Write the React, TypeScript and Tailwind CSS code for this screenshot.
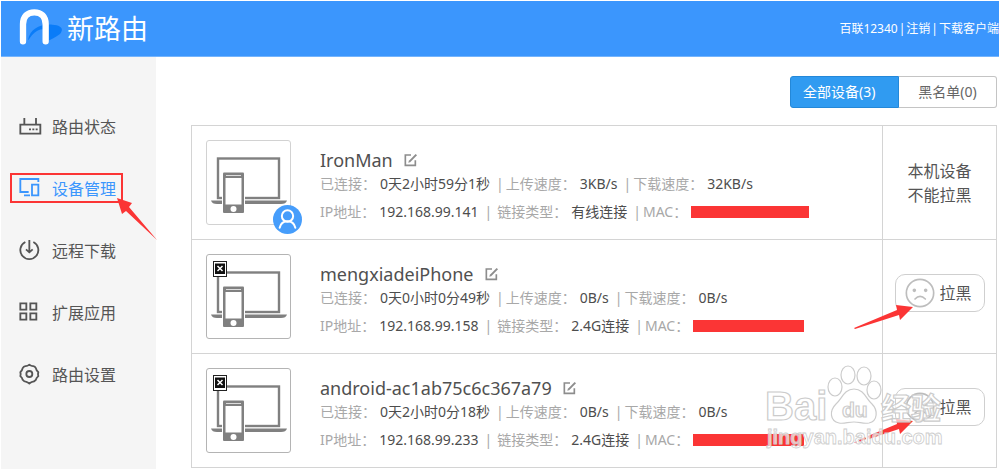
import type { ReactNode } from "react";

const RED = "#fb3535";

type Device = {
  name: string;
  connected: string;
  up: string;
  down: string;
  ip: string;
  link: string;
  own?: boolean;
  bar: string;
};

const devices: Device[] = [
  { name: "IronMan", connected: "0天2小时59分1秒", up: "3KB/s", down: "32KB/s", ip: "192.168.99.141", link: "有线连接", own: true, bar: "w-[118px]" },
  { name: "mengxiadeiPhone", connected: "0天0小时0分49秒", up: "0B/s", down: "0B/s", ip: "192.168.99.158", link: "2.4G连接", bar: "w-[111px]" },
  { name: "android-ac1ab75c6c367a79", connected: "0天2小时0分18秒", up: "0B/s", down: "0B/s", ip: "192.168.99.233", link: "2.4G连接", bar: "w-[111px]" },
];

function Logo() {
  return (
    <svg viewBox="0 0 132 108" className="h-9 w-11" aria-hidden="true">
      <path d="M27 92C34 60 62 44 100 47c30 2 34 14 23 28C110 84 96 93 82 97c8-20 6-32-8-36-18-3-33 14-45 31z" fill="#0a7cf8" />
      <path d="M12 97V46C12 22 26 10 46 10s34 12 34 36v51" fill="none" stroke="#fff" strokeWidth="19" strokeLinecap="round" />
    </svg>
  );
}

function NavSvg({ children }: { children: ReactNode }) {
  return (
    <svg viewBox="0 0 72 72" className="size-6 shrink-0" fill="none" stroke="currentColor" strokeWidth="5.500" aria-hidden="true">
      {children}
    </svg>
  );
}

const routerIcon = (
  <NavSvg>
    <path d="M7 29h60v27H7zM19 9v20M54 9v20" />
    <path d="M33 43h6M43 43h6M53 43h6" />
  </NavSvg>
);
const devicesIcon = (
  <NavSvg>
    <path d="M61 15V6H7v39h25M18 55h18" />
    <path d="M42 23h19v32H42z" />
  </NavSvg>
);
const downloadIcon = (
  <NavSvg>
    <path d="M22 9a27 27 0 1 0 24 0" />
    <path d="M34 3v35M24 31l10 9 10-9" />
  </NavSvg>
);
const appsIcon = (
  <NavSvg>
    <path d="M7 7h18v19H7zM37 7h18v19H37zM7 37h18v19H7zM37 37h18v19H37z" />
  </NavSvg>
);
const settingsIcon = (
  <NavSvg>
    <path d="M34 5q6 5 12 4.500q5 .5 7.500 6q1 6 7.500 12q-2 5.500 0 12q-6 5-7.500 11q-5 6-11 6q-4 1-8.500 5q-5-4-9-5q-7 0-11-6q-1-6-7-11q2-6.500 0-12q6-6 7-12q3-5.500 8-6q6 .5 12-4.500z" strokeLinejoin="round" />
    <circle cx="34" cy="33" r="9" />
  </NavSvg>
);

const navItems = [
  { label: "路由状态", icon: routerIcon },
  { label: "设备管理", icon: devicesIcon, active: true },
  { label: "远程下载", icon: downloadIcon },
  { label: "扩展应用", icon: appsIcon },
  { label: "路由设置", icon: settingsIcon },
];

function DevicePicture({ own }: { own?: boolean }) {
  return (
    <div className={`relative size-[85px] shrink-0 rounded-[3px] border ${own ? "border-[#d2d2d2]" : "border-[#b4b4b4]"}`}>
      <svg viewBox="1 1 83 83" className="size-full" aria-hidden="true">
        <rect x="12" y="18.500" width="61" height="39.500" fill="#fff" stroke="#808080" strokeWidth="2.400" />
        <path d="M5 60.500h76q-1 3.500-6 3.500H11q-5 0-6-3.500z" fill="#808080" />
        <rect x="16" y="31.500" width="23" height="42" fill="#fff" />
        <rect x="17" y="32.500" width="21" height="40.500" rx="1" fill="#808080" />
        <path d="M20 35.500h15" stroke="#ddd" strokeWidth="1" />
        <path d="M19.500 38h16v26.500h-16z" fill="#fff" />
        <circle cx="27.500" cy="69" r="3" fill="#fff" />
        {!own && (
          <>
            <rect x="7.500" y="7.500" width="13" height="15" fill="#fff" stroke="#222" />
            <rect x="9" y="9.500" width="10" height="10.500" fill="#111" />
            <path d="M11.500 12l5 5m0-5l-5 5" stroke="#fff" strokeWidth="1.500" />
          </>
        )}
      </svg>
      {own && (
        <svg viewBox="0 0 87 87" className="absolute -right-3 -bottom-[10px] size-[29px]" aria-hidden="true">
          <circle cx="43.500" cy="43.500" r="43.500" fill="#469dfb" />
          <g fill="none" stroke="#fff" strokeWidth="6" strokeLinecap="round">
            <circle cx="43.500" cy="33" r="17" />
            <path d="M20 68c3-12 11-19 23.500-19S64 56 67 68" />
          </g>
        </svg>
      )}
    </div>
  );
}

function EditIcon() {
  return (
    <svg viewBox="0 0 42 42" className="size-[14px]" fill="none" stroke="#8d8d8d" strokeWidth="5" aria-hidden="true">
      <path d="M21 6H4v31h30V22" />
      <path d="M17 25L37 5" strokeWidth="6" />
      <path d="M13 29l2-7 5 5z" fill="#8d8d8d" stroke="none" />
    </svg>
  );
}

const separators = {
  none: "",
  tight: "before:mr-[2px] before:ml-[6px] before:content-['|']",
  wide: "before:mr-[5px] before:ml-[6px] before:content-['|']",
};

function Field({ label, separator = "tight", children }: { label: string; separator?: keyof typeof separators; children: ReactNode }) {
  return (
    <div className={`flex items-center ${separators[separator]}`}>
      <dt>{label}：</dt>
      <dd className="ml-1 text-[#4d4d4d]">{children}</dd>
    </div>
  );
}

function SadFace() {
  return (
    <svg viewBox="0 0 90 90" className="size-[30px]" fill="none" stroke="#bdbdbd" strokeWidth="5" strokeLinecap="round" aria-hidden="true">
      <circle cx="45" cy="45" r="41" />
      <path d="M30 63q15-16 31 0" />
      <circle cx="28" cy="37" r="3" fill="#bdbdbd" />
      <circle cx="62" cy="37" r="3" fill="#bdbdbd" />
    </svg>
  );
}

function DeviceRow({ device, index }: { device: Device; index: number }) {
  return (
    <tr className="h-[114px]">
      <td className="border border-[#d4d4d4] p-0">
        <div className="flex items-center gap-[29px] pl-[14px]">
          <DevicePicture own={device.own} />
          <div className="pt-[6px] whitespace-nowrap">
            <div className="flex h-6 items-center gap-[11px]">
              <h2 className="text-[18px] leading-6 text-[#505050]">{device.name}</h2>
              <button type="button" aria-label="编辑名称">
                <EditIcon />
              </button>
            </div>
            <dl className="flex h-6 items-center text-[14px] text-[#a8a8a8]">
              <Field label="已连接" separator="none">{device.connected}</Field>
              <Field label="上传速度">{device.up}</Field>
              <Field label="下载速度">{device.down}</Field>
            </dl>
            <dl className="mt-1 flex h-6 items-center text-[14px] text-[#a8a8a8]">
              <Field label="IP地址" separator="none">{device.ip}</Field>
              <Field label="链接类型" separator="wide">{device.link}</Field>
              <Field label="MAC">
                <span className={`block h-3 bg-[#fb3535] ${device.bar}`} />
              </Field>
            </dl>
          </div>
        </div>
      </td>
      <td className="w-[114px] border border-[#d4d4d4] p-0 text-center text-[16px] leading-6 text-[#555]">
        {device.own ? (
          <p>
            本机设备
            <br />
            不能拉黑
          </p>
        ) : (
          <div className="relative mx-auto mb-2 w-[90px]">
            <button type="button" className="flex h-[38px] w-full items-center gap-[5px] rounded-[10px] border border-[#cfcfcf] bg-white pl-[9px]">
              <SadFace />
              <span>拉黑</span>
            </button>
            <svg viewBox="0 0 60 26" className="absolute top-[31px] -left-[41px] h-[26px] w-[60px]" fill={RED} aria-hidden="true">
              {index === 1 ? (
                <path d="M0 23L43 5l-1-5 17 2-13 13-1-5L1 24z" />
              ) : (
                <path d="M14 17L43 5l-1-5 17 2-13 13-1-5L15 20zM5 21l6-3 1 2-6 3zM0 24l3-2v2z" />
              )}
            </svg>
          </div>
        )}
      </td>
    </tr>
  );
}

function Watermark() {
  return (
    <svg
      viewBox="0 0 190 90"
      className="pointer-events-none absolute right-[48px] bottom-[17px] h-[90px] w-[190px] font-['Liberation_Sans','Noto_Sans_CJK_SC',sans-serif]"
      fill="#fff"
      fillOpacity="0.700"
      stroke="#cccccc"
      strokeWidth="1.200"
      aria-hidden="true"
    >
      <text x="3" y="55" fontSize="40" fontWeight="700">Bai</text>
      <ellipse cx="73" cy="22" rx="7" ry="9" />
      <ellipse cx="86" cy="10" rx="7" ry="9" />
      <ellipse cx="102" cy="11" rx="7" ry="9" />
      <ellipse cx="112" cy="25" rx="7" ry="9" />
      <path d="M92 24c10 0 12 10 18 15 6 6 6 17-3 19-6 1-9-1-15-1s-10 2-15 1c-9-2-10-12-3-19 6-5 8-15 18-15z" />
      <text x="80" y="52" fontSize="21" fontWeight="700">du</text>
      <text x="119" y="54" fontSize="30" fontWeight="700">经验</text>
      <text x="5" y="79" fontSize="20" fontWeight="700" strokeWidth="0.800">jingyan.baidu.com</text>
    </svg>
  );
}

export default function App() {
  return (
    <div className="relative overflow-hidden bg-white px-px pt-px font-['Noto_Sans','Noto_Sans_CJK_SC',sans-serif]">
      <header className="flex h-14 items-center justify-between border-b border-[#74b4fd] bg-[#3b96fd] pl-[18px] text-white">
        <a href="#" className="flex items-center gap-1">
          <span className="-mt-1">
            <Logo />
          </span>
          <span className="text-[27px] leading-9 font-normal">新路由</span>
        </a>
        <nav className="flex gap-px text-[12px] whitespace-nowrap">
          <a href="#">百联12340</a>
          <span>|</span>
          <a href="#">注销</a>
          <span>|</span>
          <a href="#">下载客户端</a>
        </nav>
      </header>

      <div className="flex">
        <aside className="w-[155px] shrink-0 bg-[#f5f5f5] pt-[39px]">
          <nav>
            {navItems.map((item) => (
              <a
                key={item.label}
                href="#"
                className={`relative flex h-[62px] items-center gap-[10px] pl-[17px] text-[16px] ${item.active ? "text-[#3b96fd]" : "text-[#555]"}`}
              >
                {item.icon}
                <span>{item.label}</span>
                {item.active && (
                  <>
                    <span className="absolute top-[15px] left-[9px] h-[30px] w-[113px] border-2 border-[#fb3535]" />
                    <svg viewBox="0 0 40 42" className="absolute top-10 left-[116px] z-10 h-[42px] w-10" fill={RED} aria-hidden="true">
                      <path d="M0 0l15 5-3 4 28 33L9 13l-4 3z" />
                    </svg>
                  </>
                )}
              </a>
            ))}
          </nav>
        </aside>

        <main className="min-w-0 flex-1 pt-[19px] pr-[2px] pb-1 pl-[35px]">
          <div className="flex justify-end text-[14px] leading-[30px]">
            <button type="button" className="w-[109px] rounded-l-[3px] border border-[#2488d8] bg-[#309bf1] pl-3 text-left text-white">
              全部设备(3)
            </button>
            <button type="button" className="w-[98px] rounded-r-[3px] border border-l-0 border-[#c4c4c4] bg-white text-[#666]">
              黑名单(0)
            </button>
          </div>
          <table className="mt-[17px] w-full border-collapse">
            <tbody>
              {devices.map((device, index) => (
                <DeviceRow key={device.name} device={device} index={index} />
              ))}
            </tbody>
          </table>
        </main>
      </div>
      <Watermark />
    </div>
  );
}
